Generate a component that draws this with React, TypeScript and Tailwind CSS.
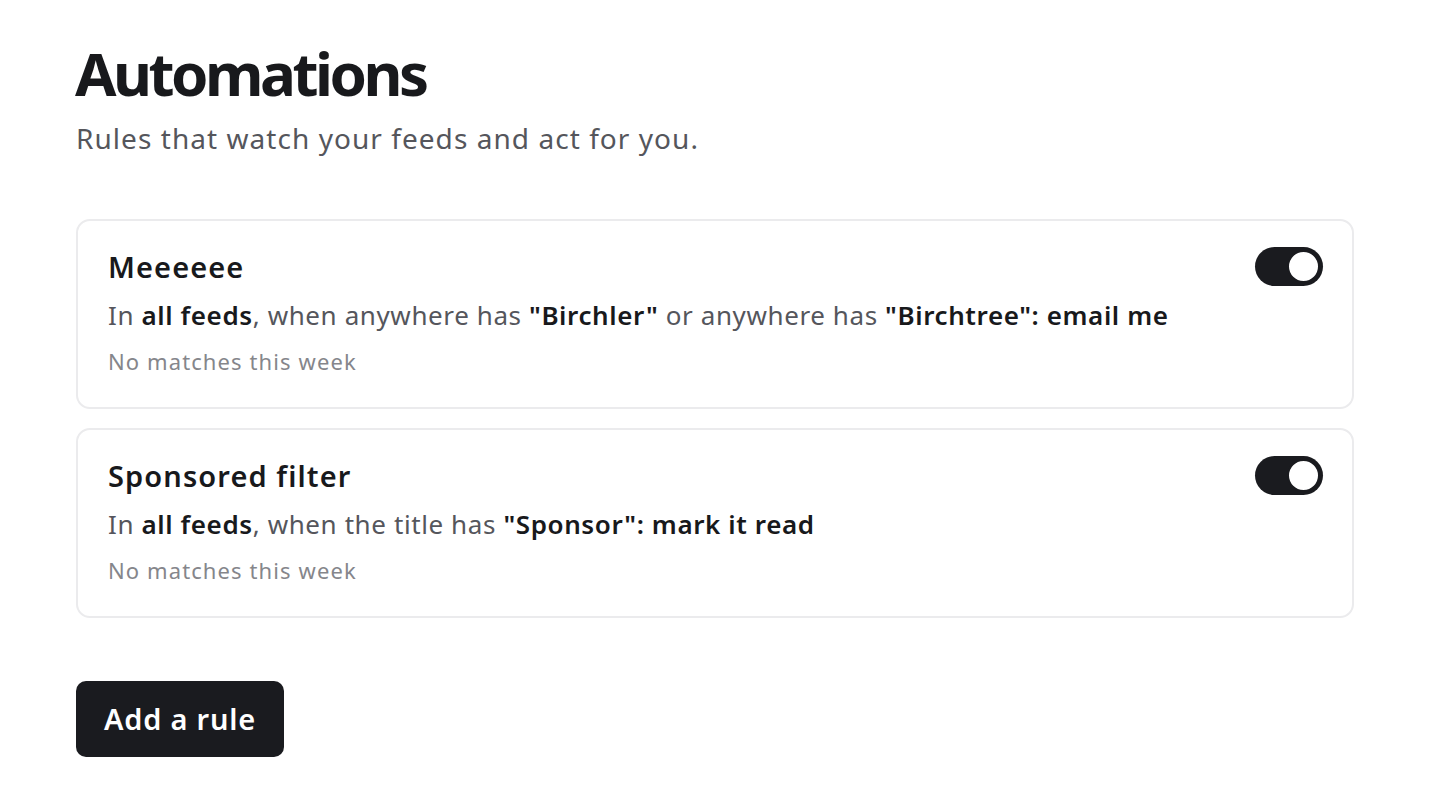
import React, { useState } from "react";

type Rule = {
  id: number;
  name: string;
  parts: { text: string; bold?: boolean }[];
  matches: string;
};

const RULES: Rule[] = [
  {
    id: 1,
    name: "Meeeeee",
    parts: [
      { text: "In " },
      { text: "all feeds", bold: true },
      { text: ", when anywhere has " },
      { text: "\"Birchler\"", bold: true },
      { text: " or anywhere has " },
      { text: "\"Birchtree\"", bold: true },
      { text: ": email me", bold: true },
    ],
    matches: "No matches this week",
  },
  {
    id: 2,
    name: "Sponsored filter",
    parts: [
      { text: "In " },
      { text: "all feeds", bold: true },
      { text: ", when the title has " },
      { text: "\"Sponsor\"", bold: true },
      { text: ": mark it read", bold: true },
    ],
    matches: "No matches this week",
  },
];

function Toggle({ on, onChange }: { on: boolean; onChange: () => void }) {
  return (
    <button
      onClick={onChange}
      className={`-mt-[2px] flex h-[39px] w-[68px] shrink-0 items-center rounded-full p-[3px] ${on ? "justify-end bg-[#1a1b1f]" : "justify-start bg-[#d4d4d8]"}`}
    >
      <span className="h-[33px] w-[33px] rounded-full border-[2px] border-[#1a1b1f] bg-white" />
    </button>
  );
}

function RuleCard({ rule }: { rule: Rule }) {
  const [on, setOn] = useState(true);
  return (
    <div className="flex items-start justify-between rounded-[14px] border-2 border-[#ebebed] bg-white pl-[30px] pr-[29px] pt-[28px] pb-[31px]">
      <div className="min-w-0">
        <p className="text-[29px] font-semibold leading-[36px] tracking-[1.1px] text-[#18191c]">{rule.name}</p>
        <p className="mt-3 text-[26px] leading-[36px] tracking-[0.6px] text-[#55565c]">
          {rule.parts.map((p, i) =>
            p.bold ? (
              <span key={i} className="font-semibold text-[#18191c]">{p.text}</span>
            ) : (
              <span key={i}>{p.text}</span>
            )
          )}
        </p>
        <p className="mt-[13px] text-[22px] leading-[30px] tracking-[1.1px] text-[#85868b]">{rule.matches}</p>
      </div>
      <Toggle on={on} onChange={() => setOn(!on)} />
    </div>
  );
}

export default function App() {
  return (
    <div className="min-h-screen bg-white px-[76px] pt-[36px] font-['Noto_Sans',sans-serif]">
      <h1 className="-ml-[1px] text-[60px] font-bold leading-[74px] tracking-[-3.5px] text-[#18191c]">Automations</h1>
      <p className="mt-[10px] text-[28px] leading-[36px] tracking-[1.05px] text-[#55565c]">Rules that watch your feeds and act for you.</p>
      <div className="mt-[63px] flex w-[1278px] flex-col gap-[19px]">
        {RULES.map((r) => (
          <RuleCard key={r.id} rule={r} />
        ))}
      </div>
      <button className="mt-[63px] h-[76px] w-[208px] rounded-[10px] bg-[#1a1b1f] text-[29px] font-semibold tracking-[0.8px] text-white">
        Add a rule
      </button>
    </div>
  );
}
